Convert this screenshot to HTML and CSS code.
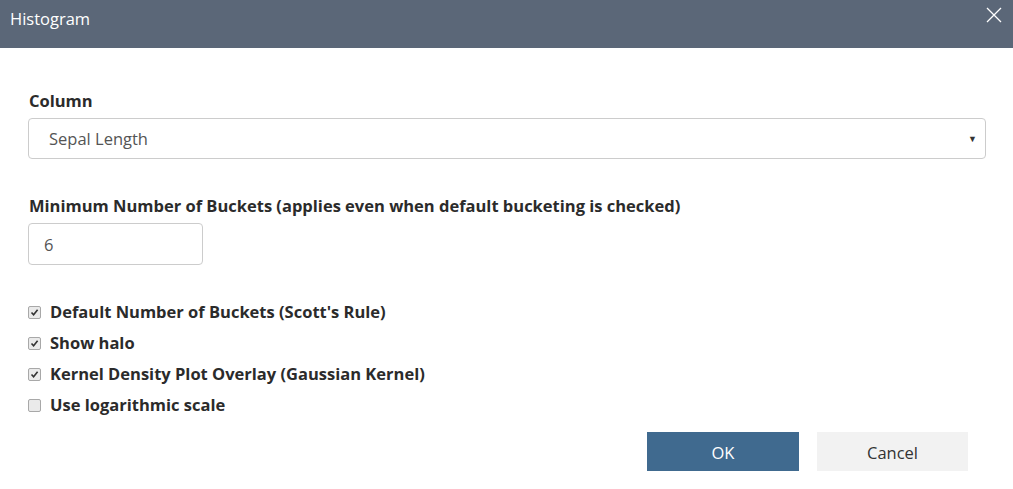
FILE: index.html
```html
<!DOCTYPE html>
<html>
<head>
<meta charset="utf-8">
<link rel="stylesheet" href="styles.css">
</head>
<body>
<div class="dialog">
  <div class="header">
    <span class="title">Histogram</span>
    <svg class="close" width="16" height="16" viewBox="0 0 16 16"><path d="M1 1L15 15M15 1L1 15" stroke="#fff" stroke-width="1.3" fill="none"/></svg>
  </div>
  <div class="body">
    <div class="field">
      <div class="label">Column</div>
      <div class="select"><span>Sepal Length</span><span class="arrow">▼</span></div>
    </div>
    <div class="field">
      <div class="label">Minimum Number of Buckets (applies even when default bucketing is checked)</div>
      <div class="input">6</div>
    </div>
    <div class="checks">
      <label class="check"><span class="box on"><svg width="9" height="9" viewBox="0 0 9 9"><path d="M1.5 4.5L3.6 6.8L7.6 1.8" stroke="#333" stroke-width="1.6" fill="none"/></svg></span>Default Number of Buckets (Scott's Rule)</label>
      <label class="check"><span class="box on"><svg width="9" height="9" viewBox="0 0 9 9"><path d="M1.5 4.5L3.6 6.8L7.6 1.8" stroke="#333" stroke-width="1.6" fill="none"/></svg></span>Show halo</label>
      <label class="check"><span class="box on"><svg width="9" height="9" viewBox="0 0 9 9"><path d="M1.5 4.5L3.6 6.8L7.6 1.8" stroke="#333" stroke-width="1.6" fill="none"/></svg></span>Kernel Density Plot Overlay (Gaussian Kernel)</label>
      <label class="check"><span class="box"></span>Use logarithmic scale</label>
    </div>
    <div class="buttons">
      <button class="btn ok">OK</button>
      <button class="btn cancel">Cancel</button>
    </div>
  </div>
</div>
</body>
</html>
```
FILE: styles.css
```css
* { box-sizing: border-box; }
html, body { margin: 0; padding: 0; background: #fff; }
body { font-family: "Open Sans", "Noto Sans", sans-serif; color: #333; width: 1013px; height: 489px; overflow: hidden; }
.header { height: 48px; background: #5b6778; display: flex; align-items: flex-start; justify-content: space-between; padding: 0 10px; }
.title { color: #fff; font-size: 16.5px; line-height: 38px; }
.close { margin-top: 7px; margin-right: 1px; }
.body { padding: 42px 27px 0 28px; }
.label { font-weight: 700; font-size: 16.5px; line-height: 22px; padding-left: 1px; margin-bottom: 6px; color: #2b2b2b; }
.select { height: 41px; border: 1px solid #ccc; border-radius: 4px; display: flex; align-items: center; justify-content: space-between; padding: 0 8px 0 20px; font-size: 16.5px; color: #555; margin-bottom: 36px; }
.arrow { font-size: 9px; color: #333; }
.input { width: 175px; height: 42px; border: 1px solid #ccc; border-radius: 4px; display: flex; align-items: center; padding-left: 15px; font-size: 16.5px; color: #555; margin-bottom: 36px; }
.checks { display: flex; flex-direction: column; gap: 9px; }
.check { display: flex; align-items: center; font-weight: 700; font-size: 16.5px; line-height: 22px; color: #2b2b2b; }
.box { width: 13px; height: 13px; border: 1px solid #a8a8a8; border-radius: 2px; background: #eaeaea; margin-right: 9px; display: flex; align-items: center; justify-content: center; }
.buttons { display: flex; justify-content: flex-end; gap: 18px; margin-top: 16px; padding-right: 18px; }
.btn { width: 152px; height: 39px; border: none; font-family: inherit; font-size: 16.5px; padding-top: 2px; }
.ok { background: #406a8f; color: #fff; }
.cancel { background: #f2f2f2; color: #333; width: 151px; }
```
